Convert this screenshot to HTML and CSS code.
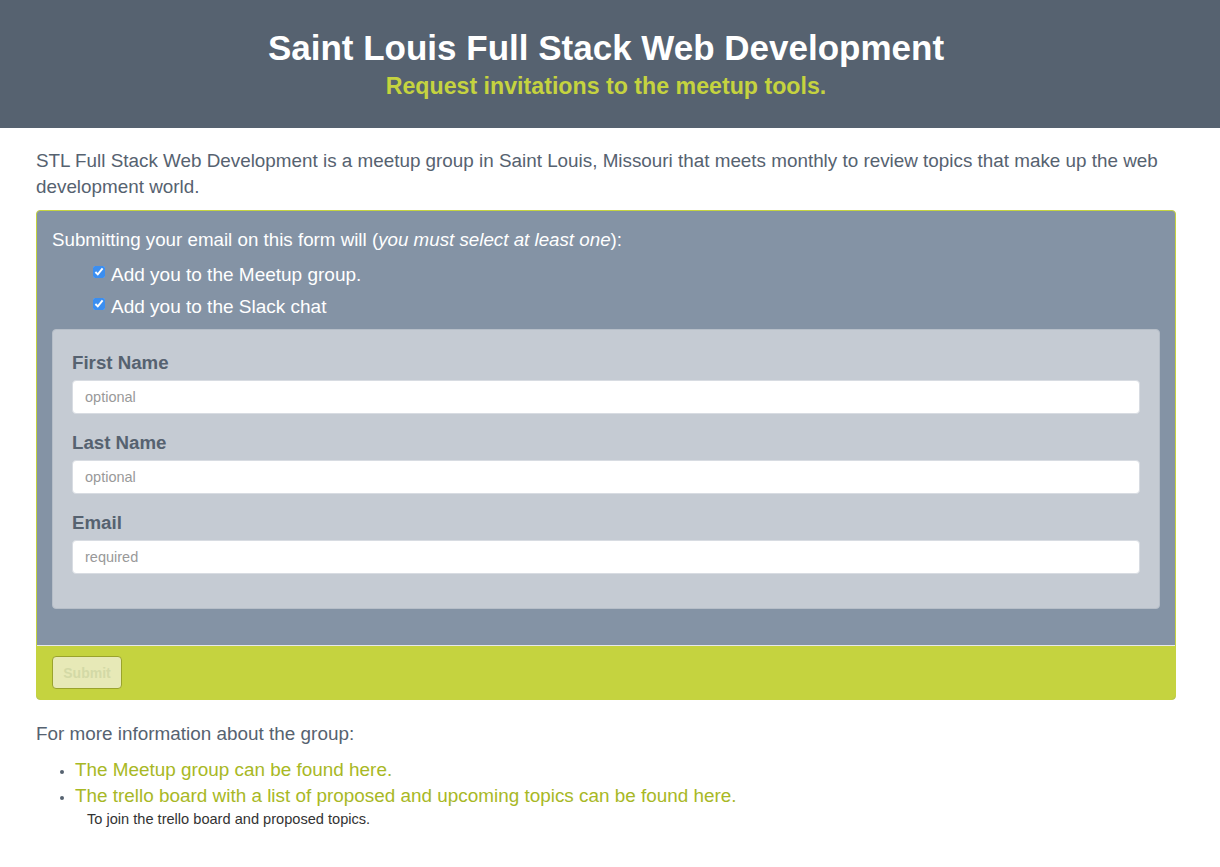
FILE: index.html
```html
<!DOCTYPE html>
<html>
<head>
<meta charset="utf-8">
<title>Saint Louis Full Stack Web Development</title>
<link rel="stylesheet" href="styles.css">
</head>
<body>
<header class="jumbo">
  <div class="container">
    <h1 class="title">Saint Louis Full Stack Web Development</h1>
    <p class="subtitle">Request invitations to the meetup tools.</p>
  </div>
</header>
<main class="container">
  <p class="intro">STL Full Stack Web Development is a meetup group in Saint Louis, Missouri that meets monthly to review topics that make up the web development world.</p>
  <form class="panel">
    <div class="panel-body">
      <p class="lead-text">Submitting your email on this form will (<em>you must select at least one</em>):</p>
      <label class="check"><input type="checkbox" checked> Add you to the Meetup group.</label>
      <label class="check"><input type="checkbox" checked> Add you to the Slack chat</label>
      <div class="well">
        <div class="field">
          <label class="field-label">First Name</label>
          <input class="input" type="text" placeholder="optional">
        </div>
        <div class="field">
          <label class="field-label">Last Name</label>
          <input class="input" type="text" placeholder="optional">
        </div>
        <div class="field">
          <label class="field-label">Email</label>
          <input class="input" type="email" placeholder="required">
        </div>
      </div>
    </div>
    <div class="panel-footer">
      <button class="btn" type="button" disabled>Submit</button>
    </div>
  </form>
  <p class="more">For more information about the group:</p>
  <ul class="links">
    <li><a href="#">The Meetup group can be found here.</a></li>
    <li><a href="#">The trello board with a list of proposed and upcoming topics can be found here.</a>
      <div class="note">To join the trello board and proposed topics.</div></li>
  </ul>
</main>
</body>
</html>
```
FILE: styles.css
```css
* { box-sizing: border-box; }
body {
  margin: 0;
  font-family: "Liberation Sans", Arial, sans-serif;
  color: #566270;
  background: #fff;
}
.container {
  width: 1140px;
  margin-left: 36px;
}
.jumbo {
  background: #566270;
  height: 128px;
  padding-top: 28px;
  text-align: center;
}
.title {
  margin: 0;
  color: #fff;
  font-size: 35px;
  font-weight: bold;
  line-height: 40px;
}
.subtitle {
  margin: 4px 0 0;
  color: #c5d33f;
  font-size: 23.2px;
  font-weight: bold;
  line-height: 28px;
}
.intro {
  margin: 20px 0 10px;
  font-size: 18.85px;
  line-height: 26px;
}
.panel {
  display: block;
  border: 1px solid #c5d33f;
  border-radius: 4px;
  overflow: hidden;
  background: #8493a5;
}
.panel-body {
  padding: 18px 15px 36px 15px;
  display: flex;
  flex-direction: column;
}
.lead-text {
  margin: 0 0 8px;
  color: #fff;
  font-size: 18.75px;
  line-height: 22px;
}
.check {
  color: #fff;
  font-size: 19px;
  line-height: 32px;
  padding-left: 41px;
  display: flex;
  align-items: center;
  gap: 6px;
}
.check input {
  margin: 0 0 6px 0;
  width: 12px;
  height: 12px;
  accent-color: #3b8ef0;
}
.well {
  margin-top: 6px;
  background: #c5cbd3;
  border: 1px solid #b6bec8;
  border-radius: 4px;
  padding: 22px 19px 34px 19px;
  display: flex;
  flex-direction: column;
  gap: 18px;
}
.field {
  display: flex;
  flex-direction: column;
  gap: 6px;
}
.field-label {
  font-weight: bold;
  font-size: 18.7px;
  line-height: 22px;
  color: #566270;
}
.input {
  height: 34px;
  border: 1px solid #d8dce2;
  border-radius: 4px;
  background: #fff;
  padding: 0 12px;
  font-family: "Liberation Sans", Arial, sans-serif;
  font-size: 14.5px;
}
.input::placeholder { color: #999; }
.panel-footer {
  background: #c5d33f;
  border-top: 1px solid #e6e8ea;
  padding: 10px 15px 10px 15px;
  height: 54px;
}
.btn {
  width: 70px;
  height: 33px;
  background: #e7e9b7;
  border: 1px solid #9aa32c;
  border-radius: 4px;
  color: #d3d9a6;
  font-family: "Liberation Sans", Arial, sans-serif;
  font-weight: bold;
  font-size: 14px;
  padding: 0;
}
.more {
  margin: 21px 0 0;
  font-size: 18.9px;
  line-height: 26px;
}
.links {
  margin: 10px 0 0;
  padding-left: 39px;
  font-size: 18.9px;
  line-height: 26px;
}
.links li::marker { color: #566270; font-size: 14px; }
.links a {
  color: #a8b825;
  text-decoration: none;
}
.note {
  margin-left: 12px;
  font-size: 14.6px;
  line-height: 20px;
  color: #333;
}
```
